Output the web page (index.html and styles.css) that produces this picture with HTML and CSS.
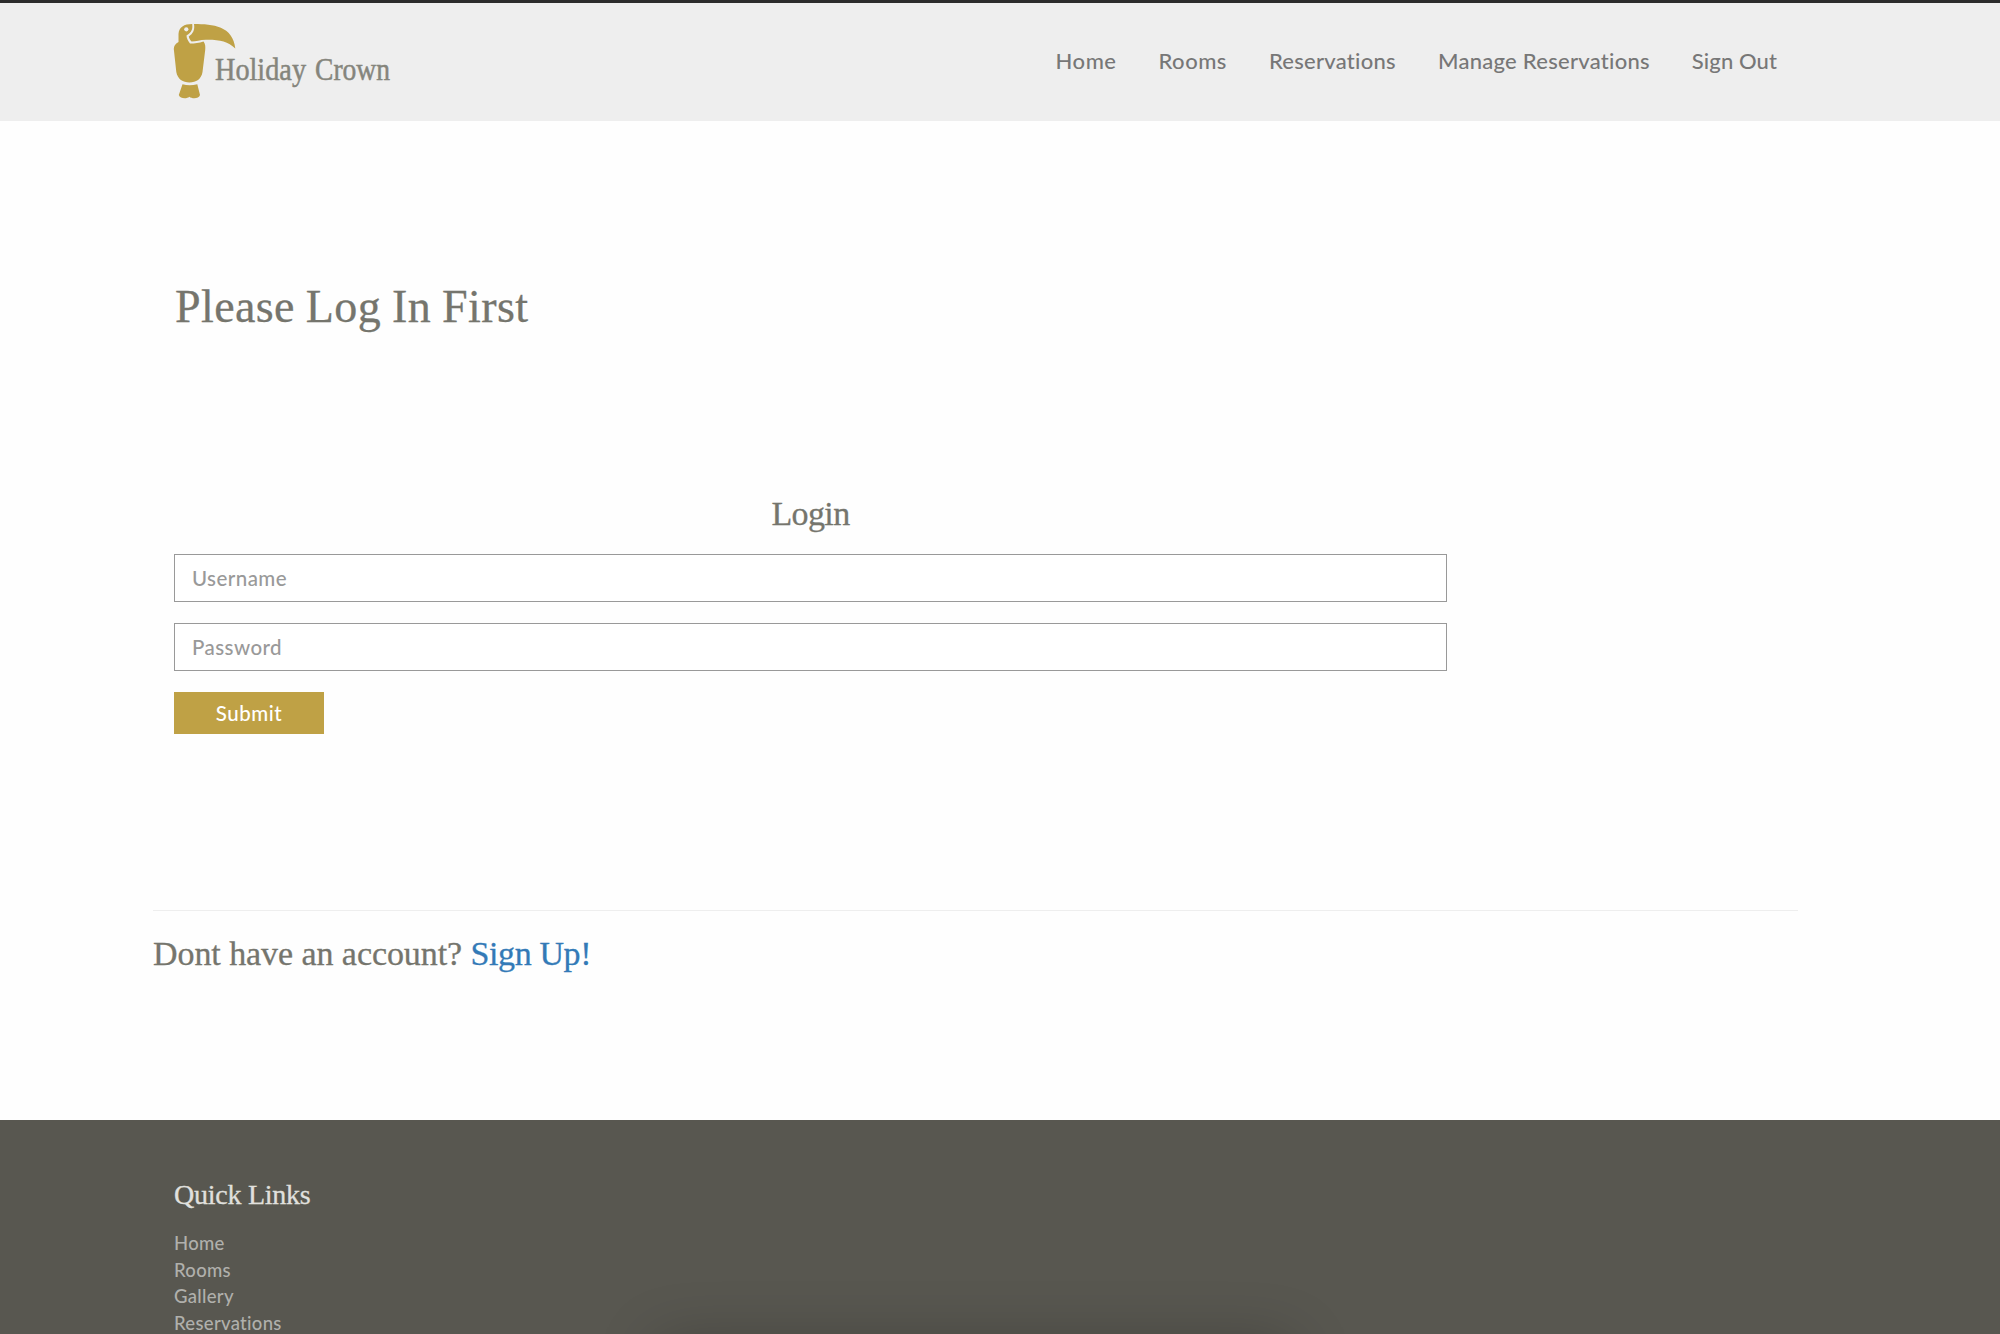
FILE: index.html
```html
<!DOCTYPE html>
<html lang="en">
<head>
<meta charset="utf-8">
<title>Holiday Crown</title>
<link rel="stylesheet" href="styles.css">
</head>
<body>
<header class="header">
  <div class="container header-row">
    <a class="logo" aria-label="Holiday Crown">
      <svg width="230" height="80" viewBox="0 0 230 80">
        <g fill="#bfa145">
          <path d="M5.5 19V11C6 4 11 1 19.2 1C19.8 6 19 9 13.5 12.5C13.5 15 15 18 17 20.500C22 20.500 26 20 30.500 18.500C32.500 21 32.500 24 32.200 27L29.500 49C28.500 56 23 59.500 16.500 59.500C10 59.500 4.500 56 3.300 49L.8 26C.8 23 2 21 5.500 19Z"/>
          <path d="M21 1C40 1 60 3 62.300 25.500C55 18 46 16.500 33 16.700C27 16.800 23 18.500 18.500 18.500C17 17 16 15 15.800 13.500C20 10.500 22 7 21 1Z"/>
          <path d="M9.5 61.300Q16.500 63 24.300 61.300L27 72C26 76 19 76 16.300 73.800C14 76 7 76 5.800 72Z"/>
        </g>
        <circle cx="13.300" cy="6.300" r="2.100" fill="#eeeeee"/>
        <g class="logo-text">
          <text x="42" y="57" textLength="91" lengthAdjust="spacingAndGlyphs">Holiday</text>
          <text x="142" y="57" textLength="75" lengthAdjust="spacingAndGlyphs">Crown</text>
        </g>
      </svg>
    </a>
    <nav class="nav">
      <a class="nav-short">Home</a><a class="nav-short">Rooms</a><a>Reservations</a><a>Manage Reservations</a><a class="nav-last">Sign Out</a>
    </nav>
  </div>
</header>
<main class="container">
  <h1 class="title">Please Log In First</h1>
  <form class="login">
    <h2 class="login-title">Login</h2>
    <input class="field" type="text" placeholder="Username">
    <input class="field" type="password" placeholder="Password">
    <button class="submit" type="button">Submit</button>
  </form>
  <h2 class="signup">Dont have an account? <a>Sign Up!</a></h2>
</main>
<footer class="footer">
  <div class="container footer-links">
    <h3>Quick Links</h3>
    <a>Home</a><a>Rooms</a><a>Gallery</a><a>Reservations</a>
  </div>
</footer>
<div class="dock-shadow"></div>
</body>
</html>
```
FILE: styles.css
```css
* { box-sizing: border-box; }
html, body { height: 100%; overflow: hidden; }
body {
  margin: 0;
  background: #fefefe;
  font-family: Lato, sans-serif;
  font-weight: 500;
  font-variant-ligatures: none;
  color: #777;
}
h1, h2, h3 {
  margin: 0;
  font-family: "Liberation Serif", serif;
  font-weight: 400;
  color: #75756d;
  -webkit-text-stroke: .3px currentColor;
}
.container { width: 1645px; margin-left: 153px; }
.header { height: 121px; background: #eee; border-top: 3px solid #2c2c2c; }
.header-row { display: flex; justify-content: space-between; padding: 20px 21px 0 20px; }
.logo { height: 80px; }
.logo-text { font: 32px "Liberation Serif", serif; fill: #85857c; stroke: #85857c; stroke-width: .5px; }
.nav { display: flex; gap: 42px; padding-top: 24px; font-size: 22px; line-height: 27px; letter-spacing: .27px; }
.nav-short { letter-spacing: .5px; }
.nav-last { letter-spacing: .1px; }
.title { padding: 160px 0 0 22px; font-size: 46px; line-height: 52px; letter-spacing: .4px; word-spacing: -1px; }
.login { display: flex; flex-direction: column; align-items: flex-start; width: 1273px; margin: 161px 0 0 21px; }
.login-title { align-self: center; font-size: 34px; line-height: 40px; letter-spacing: -.6px; margin-bottom: 20px; }
.field {
  width: 100%; height: 48px; margin: 0 0 21px; padding: 0 17px 1px;
  border: 1px solid #999; border-radius: 0; background: #fff;
  font: 500 20.5px Lato, sans-serif; letter-spacing: .45px;
}
.field::placeholder { color: #999; opacity: 1; }
.submit {
  width: 150px; height: 42px; padding: 0 0 1px; border: 0; background: #bfa145;
  color: #fff; font: 500 20.5px Lato, sans-serif; letter-spacing: .55px;
}
.signup { margin-top: 176px; padding-top: 23px; border-top: 1px solid #eee; font-size: 34px; line-height: 40px; letter-spacing: -.07px; }
.signup a { color: #337ab7; letter-spacing: -.4px; }
.footer { height: 214px; margin-top: 146px; background: #585750; overflow: hidden; }
.footer-links { display: flex; flex-direction: column; padding: 58px 21px 0; font-size: 18.5px; line-height: 26.7px; letter-spacing: .3px; color: #b0b0ac; }
.footer h3 { font-size: 28px; line-height: 34px; letter-spacing: -.25px; margin-bottom: 18px; color: #e0e0de; }
.dock-shadow { position: fixed; left: 665px; top: 1350px; width: 620px; height: 60px; box-shadow: 0 0 60px 6px rgba(0, 0, 0, .25); }
```
